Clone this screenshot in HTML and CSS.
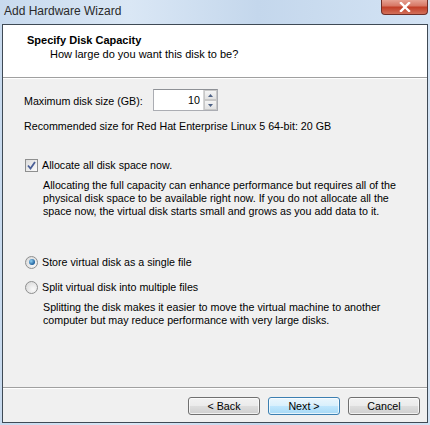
FILE: index.html
```html
<!DOCTYPE html>
<html lang="en">
<head>
  <meta charset="UTF-8" />
  <title>Add Hardware Wizard</title>
  <link rel="stylesheet" href="styles.css">
</head>
<body>

  <div class="titlebar">
    <span class="title">Add Hardware Wizard</span>
    <div class="close-btn">
      <svg width="14" height="10" viewBox="0 0 14 10">
        <path d="M3 1 L11 9 M11 1 L3 9" stroke="#fff" stroke-width="2.4" stroke-linecap="square"/>
      </svg>
    </div>
  </div>

  <div class="frame">
    <div class="header">
      <div class="header-title">Specify Disk Capacity</div>
      <div class="header-sub">How large do you want this disk to be?</div>
    </div>

    <div class="content">
      <div class="size-row">
        <label for="diskSize">Maximum disk size (GB):</label>
        <div class="spinbox">
          <input id="diskSize" type="text" value="10">
          <div class="spin">
            <div class="spin-btn"><svg width="5" height="3" viewBox="0 0 5 3"><path d="M0 3 L2.5 0 L5 3Z" fill="#4d6185"/></svg></div>
            <div class="spin-btn"><svg width="5" height="3" viewBox="0 0 5 3"><path d="M0 0 L2.5 3 L5 0Z" fill="#4d6185"/></svg></div>
          </div>
        </div>
      </div>

      <div class="recommend">Recommended size for Red Hat Enterprise Linux 5 64-bit: 20 GB</div>

      <div class="option check-row">
        <span class="checkbox">
          <svg width="9" height="9" viewBox="0 0 9 9"><path d="M1 4.5 L3.5 7.5 L8 1" fill="none" stroke="#4a5f97" stroke-width="1.8"/></svg>
        </span>
        <span>Allocate all disk space now.</span>
      </div>
      <p class="note">Allocating the full capacity can enhance performance but requires all of the<br>physical disk space to be available right now. If you do not allocate all the<br>space now, the virtual disk starts small and grows as you add data to it.</p>

      <div class="option radio-row first-radio">
        <span class="radio selected"></span>
        <span>Store virtual disk as a single file</span>
      </div>
      <div class="option radio-row">
        <span class="radio"></span>
        <span>Split virtual disk into multiple files</span>
      </div>
      <p class="note">Splitting the disk makes it easier to move the virtual machine to another<br>computer but may reduce performance with very large disks.</p>
    </div>

    <div class="footer">
      <button class="btn">&lt; Back</button>
      <button class="btn default">Next &gt;</button>
      <button class="btn">Cancel</button>
    </div>
  </div>

</body>
</html>
```

FILE: styles.css
```css
body {
  margin: 0;
  width: 430px;
  height: 425px;
  overflow: hidden;
  background: linear-gradient(to right, #c8daee, #dae7f5 30%, #c4d7ec 60%, #d3e3f4);
  font-family: 'Liberation Sans', Tahoma, sans-serif;
  font-size: 10.7px;
  color: #000;
}

.titlebar {
  height: 24px;
  display: flex;
  justify-content: space-between;
  align-items: flex-start;
  padding: 0 2px 0 4px;
}

.title {
  font-size: 12px;
  line-height: 22px;
  color: #2a2a2a;
}

.close-btn {
  width: 45px;
  height: 15px;
  margin-top: -1px;
  border: 1px solid #6e2e27;
  border-top: none;
  border-radius: 0 0 4px 4px;
  background: linear-gradient(to bottom, #e9a99b, #d77866 45%, #c23f28 55%, #d2705a);
  display: flex;
  justify-content: center;
  align-items: center;
}

.frame {
  margin: 0 2px 0 2px;
  height: 397px;
  border: 1px solid #3f4a55;
  background: #f0f0f0;
  display: flex;
  flex-direction: column;
}

.header {
  height: 53px;
  background: #fff;
  border-bottom: 1px solid #a0a0a0;
  box-shadow: 0 1px 0 #fff;
  padding: 9px 0 0 24px;
  box-sizing: border-box;
  line-height: 13px;
  font-size: 11px;
}

.header-title {
  font-weight: bold;
}

.header-sub {
  padding-left: 23px;
  margin-top: 1px;
}

.content {
  flex: 1;
  padding: 11px 0 0 21px;
  line-height: 13px;
  white-space: nowrap;
}

.size-row {
  display: flex;
  align-items: center;
  height: 22px;
}

.size-row label {
  width: 129px;
  padding-top: 3px;
}

.spinbox {
  display: flex;
  width: 65px;
  height: 22px;
  box-sizing: border-box;
  border: 1px solid #abadb3;
  border-top-color: #8e9196;
  background: #fff;
}

.spinbox input {
  width: 46px;
  border: none;
  padding: 0 3px 0 0;
  margin: 0;
  text-align: right;
  font: inherit;
  background: transparent;
  outline: none;
}

.spin {
  display: flex;
  flex-direction: column;
  width: 16px;
  border-left: 1px solid #d6d6d6;
}

.spin-btn {
  flex: 1;
  display: flex;
  justify-content: center;
  align-items: center;
  background: linear-gradient(to bottom, #f4f4f4, #e2e2e2);
  border: 1px solid #c8c8c8;
}

.recommend {
  margin-top: 9px;
}

.option {
  display: flex;
  align-items: center;
  gap: 4px;
  height: 14px;
}

.check-row {
  margin-top: 25px;
  padding-left: 1px;
}

.checkbox {
  width: 11px;
  height: 11px;
  border: 1px solid #8e8f8f;
  background: linear-gradient(135deg, #dcdcdc, #fbfbfb);
  display: flex;
  justify-content: center;
  align-items: center;
}

.note {
  margin: 7px 0 0 19px;
}

.first-radio {
  margin-top: 37px;
}

.radio-row {
  padding-left: 1px;
}

.radio-row + .radio-row {
  margin-top: 11px;
}

.radio {
  width: 11px;
  height: 11px;
  border: 1px solid #8e8f8f;
  border-radius: 50%;
  background: radial-gradient(circle at 65% 65%, #fafafa, #d4d4d4);
  display: flex;
  justify-content: center;
  align-items: center;
}

.radio.selected::after {
  content: '';
  width: 6px;
  height: 6px;
  border-radius: 50%;
  background: radial-gradient(circle at 35% 35%, #8fd0f2, #1d5f9c 70%);
}

.footer {
  height: 35px;
  border-top: 1px solid #a0a0a0;
  box-shadow: inset 0 1px 0 #fff;
  display: flex;
  justify-content: flex-end;
  align-items: flex-start;
  gap: 8px;
  padding: 9px 7px 0 0;
  box-sizing: border-box;
}

.btn {
  width: 72px;
  height: 18px;
  padding: 0;
  font: inherit;
  color: #000;
  border: 1px solid #707070;
  border-radius: 3px;
  background: linear-gradient(to bottom, #f2f2f2, #ebebeb 48%, #dddddd 52%, #cfcfcf);
  box-shadow: inset 0 0 0 1px rgba(255,255,255,0.7);
}

.btn.default {
  border-color: #3c7fb1;
  background: linear-gradient(to bottom, #eaf6fd, #d9f0fc 48%, #bee6fd 52%, #a7d9f5);
}
```
